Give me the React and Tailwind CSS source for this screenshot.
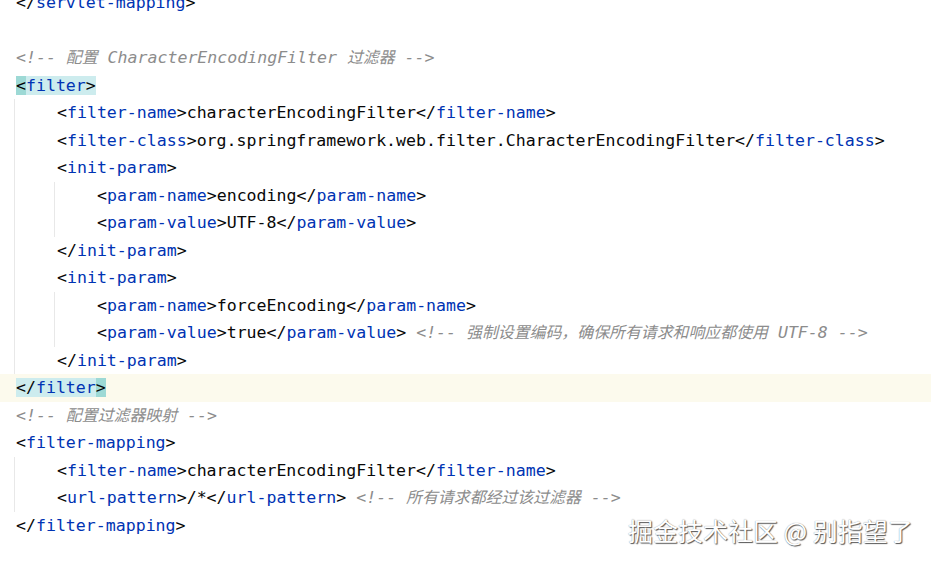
const mono = { fontFamily: '"DejaVu Sans Mono", "Noto Sans CJK SC", monospace' };

function T({ close, name }) {
  return (
    <>
      <span className="text-[#080808]">{close ? "</" : "<"}</span>
      <span className="text-[#0033b3]">{name}</span>
      <span className="text-[#080808]">{">"}</span>
    </>
  );
}

// comment: CJK runs a bit narrower than the mono cells
function C({ children }) {
  const parts = children.split(/([\u3000-\u9fff\uff00-\uffef]+)/);
  return (
    <span className="italic text-[#8c8c8c]">
      {parts.map((p, i) =>
        i % 2 ? (
          <span key={i} className="text-[15.9px]">
            {p}
          </span>
        ) : (
          p
        )
      )}
    </span>
  );
}

function Line({ children, className = "" }) {
  return <div className={"h-[27.5px] leading-[27.5px] whitespace-pre " + className}>{children}</div>;
}

function Guide({ children, outer }) {
  return (
    <div className={outer ? "ml-[14px] border-l border-[#e8e8e8] pl-[42px]" : "-ml-[3px] border-l border-[#e8e8e8] pl-[42px]"}>
      {children}
    </div>
  );
}

function El({ name, value, comment }) {
  return (
    <Line>
      <T name={name} />
      <span className="text-[#080808]">{value}</span>
      <T close name={name} />
      {comment && (
        <>
          {" "}
          <C>{comment}</C>
        </>
      )}
    </Line>
  );
}

export default function App() {
  return (
    <div className="relative w-[931px] h-[562px] overflow-hidden bg-white text-[16.57px]" style={mono}>
      <div className="-mt-[11px]">
        <Line className="pl-4">
          <T close name="servlet-mapping" />
        </Line>
        <Line />
        <Line className="pl-4">
          <C>{"<!-- 配置 CharacterEncodingFilter 过滤器 -->"}</C>
        </Line>
        <Line className="pl-4">
          <span className="bg-[#cdecee]">
            <span className="bg-[#9dd9d5]">{"<"}</span>
            <span className="text-[#0033b3]">filter</span>
            <span className="text-[#080808]">{">"}</span>
          </span>
        </Line>
        <Guide outer>
          <El name="filter-name" value="characterEncodingFilter" />
          <El name="filter-class" value="org.springframework.web.filter.CharacterEncodingFilter" />
          <Line>
            <T name="init-param" />
          </Line>
          <Guide>
            <El name="param-name" value="encoding" />
            <El name="param-value" value="UTF-8" />
          </Guide>
          <Line>
            <T close name="init-param" />
          </Line>
          <Line>
            <T name="init-param" />
          </Line>
          <Guide>
            <El name="param-name" value="forceEncoding" />
            <El name="param-value" value="true" comment="<!-- 强制设置编码，确保所有请求和响应都使用 UTF-8 -->" />
          </Guide>
          <Line>
            <T close name="init-param" />
          </Line>
        </Guide>
        <Line className="pl-4 bg-[#fcfaed]">
          <span className="bg-[#cdecee]">
            <span className="text-[#080808]">{"</"}</span>
            <span className="text-[#0033b3]">filter</span>
            <span className="bg-[#9dd9d5] text-[#080808]">{">"}</span>
          </span>
        </Line>
        <Line className="pl-4">
          <C>{"<!-- 配置过滤器映射 -->"}</C>
        </Line>
        <Line className="pl-4">
          <T name="filter-mapping" />
        </Line>
        <Guide outer>
          <El name="filter-name" value="characterEncodingFilter" />
          <El name="url-pattern" value="/*" comment="<!-- 所有请求都经过该过滤器 -->" />
        </Guide>
        <Line className="pl-4">
          <T close name="filter-mapping" />
        </Line>
      </div>
      <div
        className="absolute left-[628px] top-[514px] text-[25px] leading-[32px] text-white whitespace-pre [text-shadow:1px_1px_1px_#555,0_0_1px_#888]"
        style={{ fontFamily: '"Noto Sans CJK SC", sans-serif' }}
      >
        掘金技术社区 @ 别指望了
      </div>
    </div>
  );
}
